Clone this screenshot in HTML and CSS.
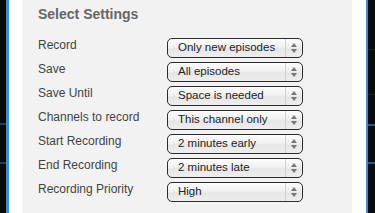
FILE: index.html
```html
<!DOCTYPE html>
<html lang="en">
<head>
  <meta charset="UTF-8" />
  <meta name="viewport" content="width=device-width, initial-scale=1.0" />
  <title>Select Settings</title>
  <link rel="stylesheet" href="styles.css">
</head>
<body>
  <div class="frame">
    <div class="edge edge-left"></div>
    <div class="gutter"></div>

    <main class="panel">
      <h1>Select Settings</h1>

      <div class="settings">
        <div class="row">
          <span class="label">Record</span>
          <div class="picker"><span class="value">Only new episodes</span><span class="arrows"></span></div>
        </div>
        <div class="row">
          <span class="label">Save</span>
          <div class="picker"><span class="value">All episodes</span><span class="arrows"></span></div>
        </div>
        <div class="row">
          <span class="label">Save Until</span>
          <div class="picker"><span class="value">Space is needed</span><span class="arrows"></span></div>
        </div>
        <div class="row">
          <span class="label">Channels to record</span>
          <div class="picker"><span class="value">This channel only</span><span class="arrows"></span></div>
        </div>
        <div class="row">
          <span class="label">Start Recording</span>
          <div class="picker"><span class="value">2 minutes early</span><span class="arrows"></span></div>
        </div>
        <div class="row">
          <span class="label">End Recording</span>
          <div class="picker"><span class="value">2 minutes late</span><span class="arrows"></span></div>
        </div>
        <div class="row">
          <span class="label">Recording Priority</span>
          <div class="picker"><span class="value">High</span><span class="arrows"></span></div>
        </div>
      </div>
    </main>

    <div class="gutter gutter-right"></div>
    <div class="edge edge-right"></div>
  </div>
</body>
</html>
```

FILE: styles.css
```css
body {
  margin: 0;
  font-family: 'Liberation Sans', Arial, sans-serif;
  background-color: #0b0b0b;
}

.frame {
  display: flex;
  height: 213px;
  overflow: hidden;
}

.edge {
  width: 6px;
  background-color: #0b0b0b;
}

.edge-left {
  border-right: 3px solid #3a8fd0;
  background:
    linear-gradient(#0b0b0b 123px, #1f3f55 123px, #1f3f55 125px, #0b0b0b 125px, #0b0b0b 162px, #1f3f55 162px, #1f3f55 164px, #0b0b0b 164px);
}

.edge-right {
  width: 7px;
  border-left: 2px solid #3a8fd0;
  background:
    linear-gradient(#0b0b0b 49px, #222 49px, #222 50px, #0b0b0b 50px, #0b0b0b 94px, #222 94px, #222 95px, #0b0b0b 95px, #0b0b0b 124px, #2a5a7a 124px, #2a5a7a 126px, #0b0b0b 126px, #0b0b0b 162px, #2a5a7a 162px, #2a5a7a 164px, #0b0b0b 164px);
}

.gutter {
  width: 14px;
  background-color: #fff;
}

.gutter-right {
  width: 14px;
}

.panel {
  flex: 1;
  background-color: #f2f2f2;
  padding: 6px 15px 0;
}

h1 {
  margin: 0 0 15px;
  font-size: 14px;
  line-height: 17px;
  font-weight: bold;
  color: #666;
}

.settings {
  display: flex;
  flex-direction: column;
  gap: 4px;
}

.row {
  display: flex;
  align-items: flex-start;
}

.label {
  width: 129px;
  font-size: 12px;
  line-height: 14px;
  color: #444;
}

.picker {
  display: flex;
  width: 134px;
  height: 18px;
  border: 1px solid #2b2b2b;
  border-radius: 5px;
  background: linear-gradient(#fdfdfd, #f1f1f1 45%, #e6e6e6 55%, #eeeeee);
}

.value {
  flex: 1;
  padding-left: 10px;
  font-size: 11.5px;
  line-height: 17px;
  color: #222;
}

.arrows {
  position: relative;
  width: 16px;
  border-left: 1px solid #cfcfcf;
}

.arrows::before,
.arrows::after {
  content: '';
  position: absolute;
  left: 5px;
  border-left: 3px solid transparent;
  border-right: 3px solid transparent;
}

.arrows::before {
  top: 4px;
  border-bottom: 4px solid #777;
}

.arrows::after {
  top: 10px;
  border-top: 4px solid #777;
}
```
